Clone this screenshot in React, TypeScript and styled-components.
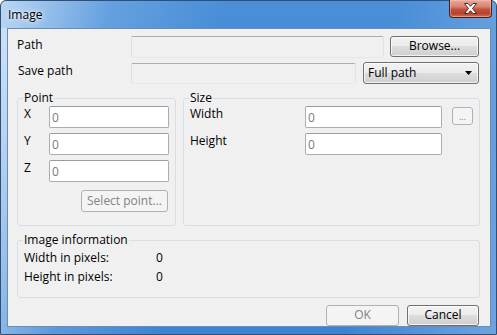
import styled, { createGlobalStyle } from "styled-components"

const GlobalStyle = createGlobalStyle`
    html, body {
        margin: 0;
        padding: 0;
    }
    body {
        width: 497px;
        height: 335px;
        overflow: hidden;
        font-family: "Open Sans", "Noto Sans", "Liberation Sans", sans-serif;
        font-size: 12px;
        color: #000;
    }
`

const Window = styled.div`
    width: 497px;
    height: 335px;
    box-sizing: border-box;
    display: flex;
    flex-direction: column;
    border: 1px solid #334e72;
    border-radius: 6px 6px 0 0;
    background:
        linear-gradient(180deg, rgba(255, 255, 255, 0) 0%, rgba(255, 255, 255, 0) 100%),
        linear-gradient(100deg, rgba(214, 232, 250, 0.8) 0%, rgba(150, 194, 238, 0.35) 20%, rgba(60, 130, 210, 0) 40%, rgba(60, 130, 210, 0) 72%, rgba(170, 204, 240, 0.45) 100%),
        linear-gradient(180deg, #4a8fd8 0%, #3f87d4 40%, #3b83d3 100%);
`

const TitleBar = styled.div`
    height: 27px;
    flex-shrink: 0;
    display: flex;
    justify-content: space-between;
    align-items: flex-start;
    padding: 0 4px 0 7px;
`

const Title = styled.span`
    line-height: 27px;
    font-size: 12px;
    color: #000;
    text-shadow: 0 0 6px rgba(255, 255, 255, 0.9), 0 0 3px rgba(255, 255, 255, 0.9);
`

const CloseButton = styled.div`
    width: 43px;
    height: 18px;
    margin-top: -1px;
    box-sizing: border-box;
    display: flex;
    align-items: center;
    justify-content: center;
    border: 1px solid #4a2018;
    border-top: none;
    border-radius: 0 0 4px 4px;
    background: linear-gradient(180deg, #e9a99b 0%, #d98272 40%, #c4503c 55%, #b8412e 80%, #d0765c 100%);
    box-shadow: inset 0 0 0 1px rgba(255, 200, 190, 0.45);
`

const Frame = styled.div`
    flex: 1;
    display: flex;
    padding: 0 5px 7px 6px;
    background: linear-gradient(180deg, rgba(220, 236, 252, 0.55) 0%, rgba(220, 236, 252, 0.2) 60%, rgba(220, 236, 252, 0) 100%) left / 6px 100% no-repeat;
`

const Client = styled.div`
    flex: 1;
    display: flex;
    flex-direction: column;
    border: 1px solid #6e8cb0;
    background: #f0f0f0;
    padding: 7px 10px 0 9px;
`

const Row = styled.div<{ $top?: number }>`
    display: flex;
    align-items: flex-start;
    height: 22px;
    padding-right: 1px;
    margin-top: ${p => p.$top ?? 0}px;
`

const Label = styled.span<{ $width?: number; $indent?: number }>`
    width: ${p => p.$width ?? 114}px;
    flex-shrink: 0;
    padding-left: ${p => p.$indent ?? 0}px;
    box-sizing: border-box;
    line-height: 16px;
    padding-top: 1px;
    white-space: nowrap;
`

const DisabledField = styled.div<{ $width?: number; $offset?: number }>`
    flex: ${p => (p.$width ? "none" : "1")};
    width: ${p => (p.$width ? `${p.$width}px` : "auto")};
    height: ${p => 22 - (p.$offset ?? 0)}px;
    margin-top: ${p => p.$offset ?? 0}px;
    box-sizing: border-box;
    border: 1px solid;
    border-color: #abadb3 #e2e3ea #e3e9ef #dbdfe6;
    border-radius: 2px;
    background: #f0f0f0;
`

const Field = styled.input`
    width: 100%;
    height: 22px;
    box-sizing: border-box;
    margin: 0;
    padding: 0 0 0 2px;
    border: 1px solid #abadb3;
    border-top-color: #9a9ca3;
    border-radius: 2px;
    background: #fff;
    font: inherit;
    color: #7a7a7a;
    outline: none;
`

const Button = styled.button<{ $width: number; $height?: number; $disabled?: boolean }>`
    width: ${p => p.$width}px;
    height: ${p => p.$height ?? 21}px;
    flex-shrink: 0;
    box-sizing: border-box;
    margin: 0;
    padding: 0 0 1px;
    font: inherit;
    border: 1px solid ${p => (p.$disabled ? "#adb2b5" : "#707070")};
    border-radius: 3px;
    color: ${p => (p.$disabled ? "#838383" : "#000")};
    background: ${p =>
        p.$disabled
            ? "#f4f4f4"
            : "linear-gradient(180deg, #f2f2f2 0%, #ebebeb 49%, #dddddd 50%, #cfcfcf 100%)"};
    box-shadow: ${p => (p.$disabled ? "none" : "inset 0 0 0 1px rgba(255,255,255,0.7)")};
    line-height: 16px;
`

const Combo = styled.div`
    width: 116px;
    height: 22px;
    flex-shrink: 0;
    box-sizing: border-box;
    display: flex;
    align-items: center;
    justify-content: space-between;
    padding: 0 6px 1px 4px;
    border: 1px solid #707070;
    border-radius: 3px;
    background: linear-gradient(180deg, #f2f2f2 0%, #ebebeb 49%, #dddddd 50%, #cfcfcf 100%);
    box-shadow: inset 0 0 0 1px rgba(255, 255, 255, 0.7);
`

const GroupRow = styled.div`
    display: flex;
    gap: 7px;
    margin-top: 6px;
`

const Group = styled.fieldset<{ $width?: number; $bottom?: number }>`
    margin: 0;
    width: ${p => (p.$width ? `${p.$width}px` : "auto")};
    flex: ${p => (p.$width ? "none" : "1")};
    box-sizing: border-box;
    padding: 0 6px ${p => p.$bottom ?? 0}px;
    border: 1px solid #d5dfe5;
    border-radius: 3px;
    min-width: 0;
`

const Legend = styled.legend`
    padding: 0 1px;
    margin-left: -1px;
    line-height: 16px;
    font-size: 12px;
`

const FormGrid = styled.div<{ $columns: string; $height: number }>`
    display: grid;
    grid-template-columns: ${p => p.$columns};
    grid-auto-rows: 22px;
    row-gap: 5px;
    align-items: start;
    height: ${p => p.$height}px;
    align-content: start;
`

const GridLabel = styled.span`
    line-height: 16px;
    white-space: nowrap;
`

const SmallButton = styled.div`
    width: 21px;
    height: 18px;
    margin: 1px 0 0 10px;
    box-sizing: border-box;
    display: flex;
    align-items: flex-end;
    justify-content: center;
    padding-bottom: 3px;
    border: 1px solid #adb2b5;
    border-radius: 3px;
    background: #f4f4f4;
    color: #838383;
    font-size: 9px;
    line-height: 9px;
`

const ButtonLine = styled.div<{ $top: number }>`
    display: flex;
    justify-content: flex-end;
    margin-top: ${p => p.$top}px;
    padding-right: 1px;
`

const InfoList = styled.div`
    display: grid;
    grid-template-columns: 132px 1fr;
    grid-auto-rows: 16px;
    row-gap: 3px;
    padding-top: 2px;
    line-height: 16px;
`

const ButtonBar = styled.div`
    display: flex;
    justify-content: flex-end;
    gap: 8px;
    margin-top: 7px;
    padding-right: 1px;
`

const CloseGlyph = () => (
    <svg width="15" height="11" viewBox="0 0 15 11">
        <path
            d="M1.5 0.5 H5 L7.5 3.3 L10 0.5 H13.5 L9.5 5.5 L13.5 10.5 H10 L7.5 7.7 L5 10.5 H1.5 L5.5 5.5 Z"
            fill="#fff"
            stroke="#4b2a26"
            strokeWidth="1"
            strokeLinejoin="round"
        />
    </svg>
)

const Arrow = () => (
    <svg width="7" height="4" viewBox="0 0 7 4">
        <path d="M0 0 H7 L3.5 4 Z" fill="#000" />
    </svg>
)

const App = () => {
    return <>
        <GlobalStyle />
        <Window>
            <TitleBar>
                <Title>Image</Title>
                <CloseButton><CloseGlyph /></CloseButton>
            </TitleBar>
            <Frame>
                <Client>
                    <Row>
                        <Label>Path</Label>
                        <DisabledField />
                        <Button $width={89} style={{ marginLeft: 6 }}>Browse...</Button>
                    </Row>
                    <Row $top={4}>
                        <Label $indent={1}>Save path</Label>
                        <DisabledField $width={225} $offset={1} />
                        <Combo style={{ marginLeft: 7 }}>
                            <span>Full path</span>
                            <Arrow />
                        </Combo>
                    </Row>
                    <GroupRow>
                        <Group $width={159} $bottom={13}>
                            <Legend>Point</Legend>
                            <FormGrid $columns="25px 120px" $height={76}>
                                <GridLabel>X</GridLabel>
                                <Field defaultValue="0" />
                                <GridLabel>Y</GridLabel>
                                <Field defaultValue="0" />
                                <GridLabel>Z</GridLabel>
                                <Field defaultValue="0" />
                            </FormGrid>
                            <ButtonLine $top={8}>
                                <Button $width={87} $height={22} $disabled>Select point...</Button>
                            </ButtonLine>
                        </Group>
                        <Group>
                            <Legend>Size</Legend>
                            <FormGrid $columns="115px 137px 31px" $height={119}>
                                <GridLabel>Width</GridLabel>
                                <Field defaultValue="0" />
                                <SmallButton>...</SmallButton>
                                <GridLabel>Height</GridLabel>
                                <Field defaultValue="0" />
                            </FormGrid>
                        </Group>
                    </GroupRow>
                    <Group $bottom={4} style={{ marginTop: 6 }}>
                        <Legend>Image information</Legend>
                        <InfoList>
                            <span>Width in pixels:</span>
                            <span>0</span>
                            <span>Height in pixels:</span>
                            <span>0</span>
                        </InfoList>
                    </Group>
                    <ButtonBar>
                        <Button $width={73} $disabled>OK</Button>
                        <Button $width={72}>Cancel</Button>
                    </ButtonBar>
                </Client>
            </Frame>
        </Window>
    </>
}

export default App
